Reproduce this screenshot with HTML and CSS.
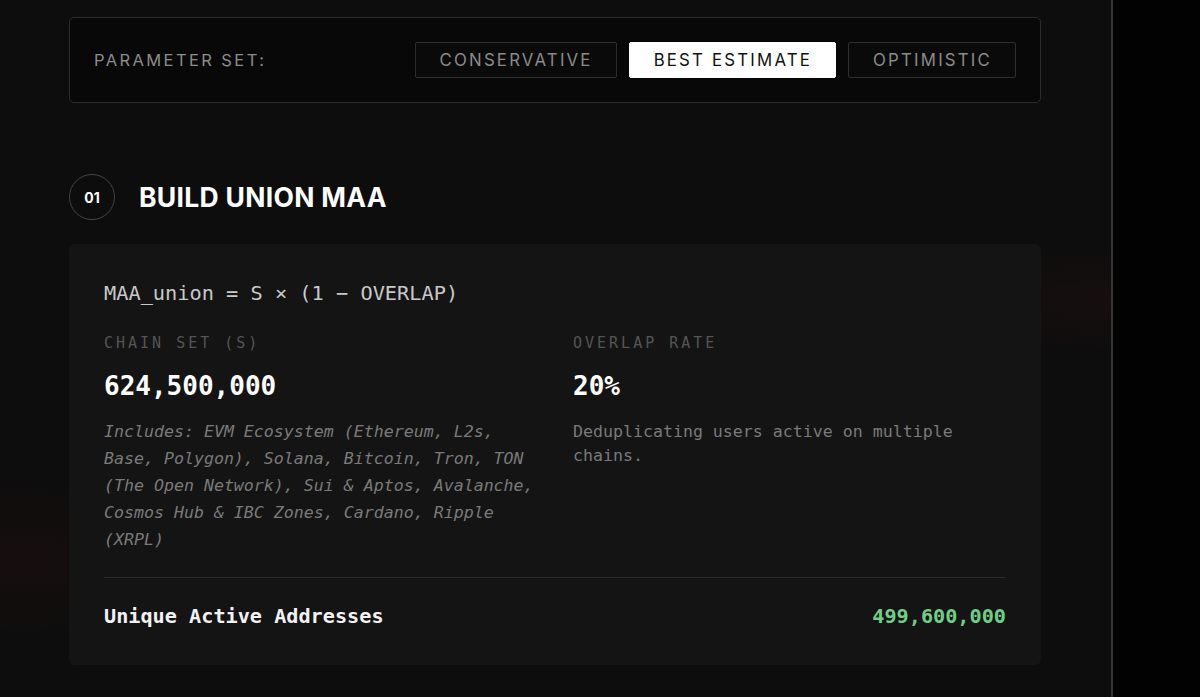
FILE: index.html
```html
<!DOCTYPE html>
<html>
<head>
<meta charset="utf-8">
<link rel="stylesheet" href="styles.css">
</head>
<body>
<div class="page">
  <main class="main">
    <div class="param-box">
      <span class="param-label">PARAMETER SET:</span>
      <div class="param-buttons">
        <button class="pbtn">CONSERVATIVE</button>
        <button class="pbtn active">BEST ESTIMATE</button>
        <button class="pbtn">OPTIMISTIC</button>
      </div>
    </div>

    <div class="section-head">
      <div class="step">01</div>
      <h2 class="section-title">BUILD UNION MAA</h2>
    </div>

    <div class="card">
      <div class="formula">MAA_union = S × (1 − OVERLAP)</div>
      <div class="cols">
        <div class="col">
          <div class="col-label">CHAIN SET (S)</div>
          <div class="col-value">624,500,000</div>
          <div class="col-desc italic">Includes: EVM Ecosystem (Ethereum, L2s, Base, Polygon), Solana, Bitcoin, Tron, TON (The Open Network), Sui &amp; Aptos, Avalanche, Cosmos Hub &amp; IBC Zones, Cardano, Ripple (XRPL)</div>
        </div>
        <div class="col">
          <div class="col-label">OVERLAP RATE</div>
          <div class="col-value">20%</div>
          <div class="col-desc plain">Deduplicating users active on multiple chains.</div>
        </div>
      </div>
      <div class="result">
        <span class="result-label">Unique Active Addresses</span>
        <span class="result-value">499,600,000</span>
      </div>
    </div>
  </main>
  <div class="side"></div>
</div>
</body>
</html>
```

FILE: styles.css
```css
* { box-sizing: border-box; }
html, body { margin: 0; padding: 0; height: 100%; }
body {
  background: #020202;
  font-family: "Inter", "Liberation Sans", sans-serif;
  color: #fff;
  overflow: hidden;
}
.page {
  display: flex;
  height: 697px;
}
.main {
  width: 1113px;
  flex: none;
  padding: 17px 70px 0 69px;
  background:
    radial-gradient(ellipse 260px 120px at 20px 560px, rgba(40, 14, 14, 0.35), transparent 70%),
    radial-gradient(ellipse 300px 80px at 1100px 300px, rgba(40, 16, 16, 0.35), transparent 70%),
    #0d0d0d;
  border-right: 2px solid #363636;
}
.side {
  flex: 1;
  background: #020202;
}
.param-box {
  display: flex;
  align-items: center;
  justify-content: space-between;
  height: 86px;
  padding: 0 24px;
  border: 1px solid #2c2c2c;
  border-radius: 5px;
  background: #080808;
}
.param-label {
  font-size: 16.5px;
  letter-spacing: 2.4px;
  color: #8c8c8c;
}
.param-buttons {
  display: flex;
  gap: 12px;
}
.pbtn {
  height: 36px;
  padding: 0 23px 0 24px;
  font-family: "Inter", "Liberation Sans", sans-serif;
  font-size: 16.8px;
  letter-spacing: 2.2px;
  color: #8a8a8a;
  background: #0a0a0a;
  border: 1px solid #2e2e2e;
  border-radius: 2px;
}
.pbtn.active {
  background: #ffffff;
  color: #111;
  border-color: #fff;
}
.section-head {
  display: flex;
  align-items: center;
  gap: 24px;
  margin-top: 71px;
  height: 46px;
}
.step {
  width: 46px;
  height: 46px;
  border-radius: 50%;
  border: 1.5px solid #444;
  display: flex;
  align-items: center;
  justify-content: center;
  font-size: 14px;
  font-weight: 700;
  color: #fff;
}
.section-title {
  margin: 0;
  font-size: 26.5px;
  font-weight: 700;
  letter-spacing: 0.3px;
  color: #fff;
}
.card {
  margin-top: 24px;
  background: #141414;
  border-radius: 6px;
  padding: 35px 35px 36px;
  font-family: "DejaVu Sans Mono", "Liberation Mono", monospace;
}
.formula {
  font-size: 20.3px;
  line-height: 28px;
  color: #c9c9c9;
}
.cols {
  display: grid;
  grid-template-columns: 1fr 1fr;
  column-gap: 36px;
  margin-top: 26px;
}
.col-label {
  font-size: 15px;
  line-height: 20px;
  letter-spacing: 3px;
  color: #555;
}
.col-value {
  margin-top: 20px;
  font-size: 26px;
  line-height: 26px;
  font-weight: 700;
  color: #fff;
}
.col-desc {
  font-size: 16.6px;
  color: #7a7a7a;
}
.col-desc.italic {
  margin-top: 19px;
  font-style: italic;
  line-height: 27px;
}
.col-desc.plain {
  margin-top: 21px;
  line-height: 23.5px;
}
.result {
  margin-top: 24px;
  border-top: 1px solid #2b2b2b;
  padding-top: 25px;
  display: flex;
  justify-content: space-between;
  align-items: center;
  font-size: 20.2px;
  line-height: 26px;
  font-weight: 700;
}
.result-label { color: #f2f2f2; }
.result-value { color: #6fcf86; }
```
